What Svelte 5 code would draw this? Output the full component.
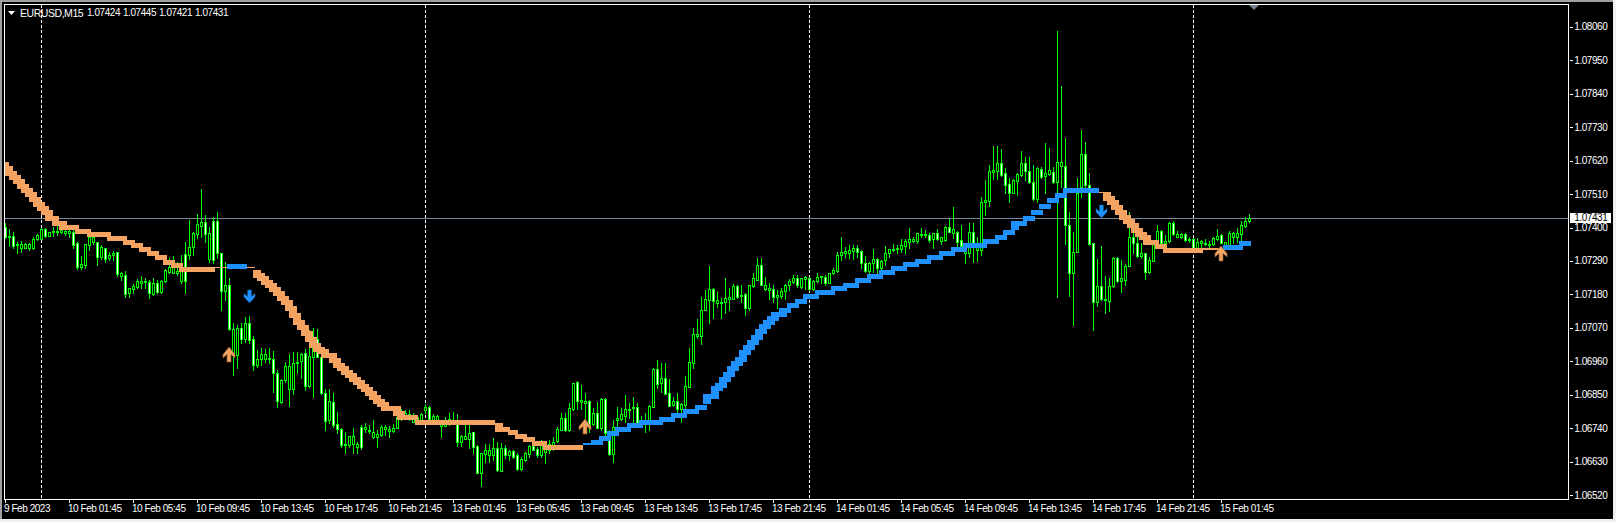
<script>
  const candles = [
    [223,227,237,238,1],[229,236,237,246],[232,236,246,248,1],[242,244,245,253],[241,244,248,252],[243,244,248,248],[243,244,248,250],[237,239,248,249],[234,235,239,240],[228,229,239,239],
    [228,229,236,237,1],[232,232,236,236],[227,231,232,236],[226,231,232,235],[227,230,232,233],[227,231,233,235],[227,231,233,237],[227,232,245,248,1],[242,243,267,269,1],[256,264,267,269],
    [244,244,265,268],[235,237,245,250],[234,237,242,244],[242,242,257,265,1],[245,247,257,259],[248,248,259,262,1],[252,255,258,260],[251,253,255,260],[252,252,274,276,1],[272,273,276,280],
    [271,275,294,297,1],[288,288,293,297],[284,286,289,293],[279,281,287,288],[276,281,283,288],[278,281,282,288],[280,282,293,298,1],[278,283,294,295],[280,283,292,293,1],[280,281,292,293],
    [269,270,281,282],[258,267,272,273],[256,267,273,273],[262,271,273,275],[255,270,281,283],[242,254,281,293,1],[220,247,255,259],[232,233,247,255],[214,224,234,238],[189,222,226,237],
    [215,222,234,242,1],[227,233,259,262],[217,221,260,263,1],[212,221,253,258,1],[253,253,291,310,1],[262,285,291,300],[278,285,329,330,1],[323,329,355,375],[325,328,355,368],[323,328,339,343,1],
    [317,323,339,342],[316,323,340,343,1],[336,339,365,370,1],[350,359,365,367],[348,354,359,365],[349,354,359,362],[348,358,359,363],[351,359,373,392,1],[370,373,401,407,1],[379,380,402,403],
    [362,366,380,382],[354,366,389,406],[352,363,389,394],[352,362,363,373],[353,354,361,378],[349,353,386,390,1],[330,356,386,387],[328,340,357,397],[329,339,357,357,1],[355,357,393,394,1],
    [389,393,421,430,1],[389,401,420,423],[393,402,425,427,1],[412,424,429,433,1],[428,429,445,447,1],[432,444,445,453],[436,436,445,447],[428,436,444,453],[442,444,447,453],[425,427,447,449,1],
    [423,427,429,432],[425,430,431,433],[420,432,437,438],[430,434,437,447],[425,427,435,436],[425,427,429,435],[426,429,431,437],[424,428,431,432],[411,417,428,428],
    [409,411,417,420],[410,413,416,418],[410,414,416,420],[413,415,422,422],[416,417,422,423],[413,414,420,421],[404,407,410,413],[406,407,419,420,1],[414,416,420,423],[415,416,423,423],
    [420,423,426,437],[417,423,426,426],[413,419,423,425],[412,420,423,424],[414,423,442,446,1],[435,436,442,446],[425,436,439,439],[423,433,439,448],[432,432,447,453,1],[445,446,473,473,1],
    [453,453,473,486],[444,450,454,462],[444,450,455,462],[438,448,455,460],[442,448,470,471,1],[443,448,471,471],[445,448,455,458,1],[450,451,455,460],[450,451,457,458,1],[453,455,469,470,1],
    [457,459,469,470],[452,453,460,461],[445,446,454,457],[440,446,450,450,1],[447,449,455,457,1],[440,445,455,457],[442,448,452,463],[440,444,450,453],[437,442,445,450],[427,429,441,442],
    [413,418,430,430],[413,418,430,431,1],[403,408,430,431],[383,383,409,410],[381,382,401,409,1],[385,400,402,409],[393,401,403,423],[400,401,425,432,1],[408,413,424,425],[402,413,428,428,1],
    [398,399,428,430],[398,399,433,435,1],[430,432,454,455,1],[420,427,454,462],[407,418,420,432],[408,414,419,420],[395,409,416,422],[403,409,410,418],[397,407,408,426],[403,407,423,425,1],
    [416,420,423,426],[413,420,423,432],[405,406,420,430],[368,369,407,407],[360,369,384,388,1],[363,378,383,392],[363,378,394,394,1],[379,393,406,406,1],[397,401,405,406],[393,401,409,412,1],
    [403,404,409,422],[376,386,405,413],[348,362,387,387],[328,334,363,368],[319,334,336,338],[297,310,336,344],[290,299,310,310],[266,289,300,323],[288,289,301,318,1],[292,300,303,307],
    [298,302,303,318],[278,298,302,313],[288,297,299,310],[284,286,299,299],[285,286,297,298,1],[285,295,296,302],[293,294,308,315,1],[285,285,308,310],[273,278,286,287],[258,265,280,280],
    [258,265,285,285,1],[277,285,289,290],[283,288,290,299],[285,289,297,302,1],[290,295,297,308],[288,291,296,298],[284,285,291,299],[279,281,285,290],[275,278,282,283],[275,278,285,287,1],
    [278,278,287,288],[276,277,279,289],[277,278,289,290,1],[280,281,289,290],[273,277,281,282],[276,276,277,283],[275,277,283,285,1],[273,273,283,283],[268,270,273,274],[252,255,271,272],
    [237,252,255,260],[247,251,253,257],[245,250,253,258],[245,248,251,259],[245,248,252,257,1],[250,251,263,268,1],[256,263,271,272,1],[262,263,271,277],[249,259,263,272],[258,259,268,273,1],
    [260,261,268,273],[246,253,260,265],[249,249,253,257],[244,249,250,251],[245,248,249,253],[239,245,249,252],[239,241,246,253],[228,239,242,248],[237,239,241,242],[233,233,241,243],
    [228,234,235,237],[230,234,235,237],[233,235,240,242,1],[233,233,239,248],[229,233,239,240,1],[237,237,241,244],[226,227,240,241],[219,227,232,232,1],[207,229,233,238],[231,232,242,247,1],
    [225,240,246,250,1],[243,247,253,263],[223,232,253,257],[223,232,243,262,1],[237,245,250,261],[197,202,250,255],[180,200,202,215],[165,171,201,206],[146,170,172,179],[146,163,171,179],
    [149,163,175,176,1],[168,173,185,193,1],[178,184,193,202,1],[179,180,193,193],[173,174,181,195],[151,163,175,176],[157,163,171,180,1],[157,171,182,183,1],[165,182,199,200,1],[167,168,199,202],
    [167,169,177,178,1],[143,173,176,193],[148,170,174,175],[167,172,182,183,1],[31,162,182,297],[86,162,166,187],[138,166,225,244,1],[212,225,273,296,1],[232,252,273,325],[178,193,252,252],
    [130,154,187,197],[142,154,185,187,1],[173,185,244,245,1],[243,243,302,330,1],[259,286,302,306],[246,286,299,300,1],[276,299,300,313],[278,286,301,311],[257,258,286,287],[257,258,281,282,1],
    [260,278,281,292],[264,266,280,285],[212,237,266,266],[220,237,243,253,1],[227,243,256,257,1],[243,253,256,258],[253,253,272,279,1],[257,260,272,273],[240,244,261,261],[225,231,244,245],
    [230,231,243,243,1],[235,241,243,250],[222,223,241,242],[221,223,234,235,1],[231,234,237,237],[233,234,237,238],[233,234,240,241,1],[237,239,240,242],[238,239,248,249,1],[238,242,248,249],
    [240,241,243,248],[239,243,244,245],[241,244,245,248],[237,238,244,245],[229,236,239,240],[234,235,243,243,1],[242,242,245,247],[231,233,245,249],[232,233,237,243],[228,233,237,242],
    [221,225,234,240],[217,221,226,227],[214,218,221,222]
  ].map(([hi, top, bot, lo, white], k) => ({ x: 5 + 4 * k, hi, top, bot, lo, white }));

  // One 8px block per bar, centred on the bar.
  const steps = (startK, ys) => ys.map((y, i) => [1 + 4 * (startK + i), 9 + 4 * (startK + i), y]);

  // The indicator is a 5px pen: on the slopes a block also reaches down to the next level.
  const blocks = (segments) => segments.map(([a, b, y], i) => {
    const next = segments[i + 1];
    const steep = b - a <= 8 && next && Math.abs(next[2] - y) < 12;
    const y0 = steep ? Math.min(y, next[2]) : y;
    const y1 = steep ? Math.max(y, next[2]) : y;
    return { x: Math.max(a, 5), w: b - Math.max(a, 5), y: Math.round(y0 - 2.5), h: Math.round(y1 - y0 + 5) };
  });

  const orange = blocks([
    ...steps(0, [164, 168, 173, 177, 181, 186, 190, 194, 199, 204, 208, 212]),
    [52, 59, 218], [59, 67, 223], [63, 79, 227], [75, 91, 231], [87, 111, 234.5], [107, 127, 238],
    [123, 135, 242], [131, 143, 245], [139, 151, 249], [147, 159, 253], [155, 167, 257], [163, 175, 262],
    [171, 183, 265], [179, 215, 269],
    ...steps(63, [272, 275, 278, 282, 285, 289, 293, 298, 302, 308, 315, 322, 327, 333, 339, 345, 349, 351, 355, 355, 360, 365, 368, 372, 375, 379, 382, 386, 389, 393, 397, 401, 404, 408, 408, 408, 413]),
    [403, 418, 417], [415, 495, 422], [495, 503, 425], [500, 510, 429], [508, 518, 432], [515, 527, 436],
    [523, 535, 439], [532, 547, 443], [543, 583, 447],
    [1103, 1111, 194], [1107, 1115, 198], [1111, 1119, 202], [1115, 1123, 207], [1119, 1127, 212], [1123, 1131, 217],
    [1127, 1135, 221], [1131, 1139, 225], [1135, 1143, 230], [1139, 1147, 234], [1143, 1151, 237], [1147, 1159, 242],
    [1155, 1167, 246], [1163, 1203, 250]
  ]);

  const blue = blocks([
    [227, 247, 266],
    [591, 603, 442], [599, 611, 438], [607, 619, 433], [615, 631, 429], [627, 643, 425], [639, 663, 422],
    [659, 675, 419], [671, 687, 415], [683, 699, 411], [695, 707, 407], [703, 711, 401], [707, 719, 396],
    [711, 719, 393], [715, 723, 388], [719, 727, 385], [723, 731, 379], [727, 735, 374], [731, 739, 368],
    [735, 743, 363], [739, 747, 359], [743, 751, 352], [747, 755, 347], [751, 759, 342], [755, 763, 337],
    [759, 767, 331], [763, 771, 326], [767, 775, 322], [771, 779, 318], [775, 787, 314], [779, 791, 310],
    [787, 799, 305], [795, 807, 301], [803, 819, 296], [815, 835, 292], [831, 847, 288], [843, 859, 285],
    [855, 871, 280], [867, 883, 276], [879, 895, 272], [891, 907, 268], [903, 919, 264], [915, 931, 261],
    [927, 943, 257], [939, 955, 253], [951, 967, 249], [963, 987, 245], [983, 999, 241], [995, 1007, 237],
    [1003, 1015, 232], [1011, 1019, 227], [1015, 1027, 223], [1023, 1035, 218], [1031, 1043, 212], [1039, 1051, 206],
    [1047, 1059, 200], [1055, 1067, 195], [1063, 1099, 190], [1223, 1243, 247], [1239, 1251, 243.5]
  ]);

  const thin = [
    { x: 215, w: 12, y: 267, h: 1, c: '#f4a460' },
    { x: 247, w: 8, y: 267, h: 1, c: '#f4a460' },
    { x: 583, w: 9, y: 443, h: 2, c: '#1e90ff' },
    { x: 1099, w: 4, y: 192, h: 1, c: '#f4a460' },
    { x: 1203, w: 17, y: 248, h: 2, c: '#f4a460' }
  ];

  const arrowsUp = [[229, 347], [585, 419], [1221, 246]];
  const arrowsDown = [[249.5, 290], [1101.5, 205]];
  const upPath = 'M0 0 L6 7.5 L6 11 L2 7.5 L2 15 L-2 15 L-2 7.5 L-6 11 L-6 7.5 Z';
  const downPath = 'M-2 0 L2 0 L2 6.5 L5.5 3.5 L5.5 7 L0 13 L-5.5 7 L-5.5 3.5 L-2 6.5 Z';

  const gridLines = [41, 425, 809, 1193];

  const prices = ['1.08060', '1.07950', '1.07840', '1.07730', '1.07620', '1.07510', '1.07400', '1.07290',
    '1.07180', '1.07070', '1.06960', '1.06850', '1.06740', '1.06630', '1.06520'];

  const times = ['9 Feb 2023', '10 Feb 01:45', '10 Feb 05:45', '10 Feb 09:45', '10 Feb 13:45', '10 Feb 17:45', '10 Feb 21:45',
    '13 Feb 01:45', '13 Feb 05:45', '13 Feb 09:45', '13 Feb 13:45', '13 Feb 17:45', '13 Feb 21:45',
    '14 Feb 01:45', '14 Feb 05:45', '14 Feb 09:45', '14 Feb 13:45', '14 Feb 17:45', '14 Feb 21:45', '15 Feb 01:45'];
</script>

<div class="window">
  <div class="chart-row">
    <div class="plot">
      <svg class="canvas" viewBox="5 5 1563 494" width="1563" height="494" shape-rendering="crispEdges">
        {#each gridLines as x}
          <line x1={x + 0.5} y1="5" x2={x + 0.5} y2="499" class="grid" />
        {/each}
        <rect x="5" y="218" width="1563" height="1" fill="#778899" />
        {#each candles as c}
          <rect x={c.x} y={c.hi} width="1" height={c.lo - c.hi + 1} fill="#00ff00" />
          <rect x={c.x - 1} y={c.top} width="3" height={c.bot - c.top + 1} fill="#00ff00" />
          {#if c.bot - c.top >= 2}
            <rect x={c.x} y={c.top + 1} width="1" height={c.bot - c.top - 1} fill={c.white ? '#ffffff' : '#000000'} />
          {/if}
        {/each}
        {#each orange as b}
          <rect x={b.x} y={b.y} width={b.w} height={b.h} fill="#f4a460" />
        {/each}
        {#each blue as b}
          <rect x={b.x} y={b.y} width={b.w} height={b.h} fill="#1e90ff" />
        {/each}
        {#each thin as t}
          <rect x={t.x} y={t.y} width={t.w} height={t.h} fill={t.c} />
        {/each}
        <g shape-rendering="geometricPrecision">
          {#each arrowsUp as [x, y]}
            <path d={upPath} transform="translate({x} {y})" fill="#f4a460" stroke="#8a5a30" stroke-width=".7" />
          {/each}
          {#each arrowsDown as [x, y]}
            <path d={downPath} transform="translate({x} {y})" fill="#1e90ff" stroke="#12568f" stroke-width=".5" />
          {/each}
        </g>
      </svg>
      <div class="legend">
        <svg class="caret" viewBox="0 0 7 4" width="7" height="4"><path d="M0 0H7L3.5 4Z" fill="#fff" /></svg>
        <span class="symbol">EURUSD,M15</span>
        <span class="quote">1.07424</span>
        <span class="quote">1.07445</span>
        <span class="quote">1.07421</span>
        <span class="quote">1.07431</span>
      </div>
      <svg class="marker" viewBox="0 0 10 5" width="10" height="5"><path d="M0 0H10L5 5Z" fill="#708090" /></svg>
    </div>
    <div class="prices">
      {#each prices as p}
        <div class="price"><i class="ptick"></i><span>{p}</span></div>
      {/each}
      <div class="tag">1.07431</div>
    </div>
  </div>
  <div class="times">
    {#each times as t}
      <div class="time"><i class="ttick"></i><span>{t}</span></div>
    {/each}
  </div>
</div>

<style>
  :global(body) {
    margin: 0;
    background: #f0f0f0;
  }
  .window {
    width: 1609px;
    height: 515px;
    background: #000;
    border-top: 2px solid #a0a0a0;
    border-left: 2px solid #a0a0a0;
    padding: 2px 0 0 2px;
    color: #fff;
    font: 10px/12px "Liberation Sans", Arial, sans-serif;
    letter-spacing: -0.45px;
    overflow: hidden;
  }
  .chart-row {
    display: flex;
    height: 496px;
  }
  .plot {
    position: relative;
    width: 1563px;
    height: 494px;
    border: 1px solid #fff;
    flex: none;
  }
  .canvas {
    display: block;
  }
  .grid {
    stroke: #fff;
    stroke-width: 1;
    stroke-dasharray: 3 2;
  }
  .legend {
    position: absolute;
    top: 2px;
    left: 3px;
    display: flex;
    align-items: center;
    white-space: nowrap;
    height: 12px;
  }
  .caret {
    margin-right: 5px;
  }
  .symbol {
    width: 67px;
    flex: none;
    font-size: 10.5px;
  }
  .quote {
    width: 36px;
    flex: none;
  }
  .marker {
    position: absolute;
    top: 0;
    left: 1244px;
  }
  .prices {
    position: relative;
    flex: none;
    width: 44px;
    height: 496px;
    padding-top: 17.3px;
    box-sizing: border-box;
    display: grid;
    grid-auto-rows: 33.46px;
    align-content: start;
  }
  .price {
    display: flex;
    align-items: center;
    height: 12px;
  }
  .ptick {
    width: 3px;
    height: 1px;
    background: #fff;
    margin: 0 1.3px 0 1px;
    flex: none;
  }
  .tag {
    position: absolute;
    top: 209px;
    left: 1px;
    width: 41px;
    height: 10px;
    line-height: 10px;
    background: #fff;
    color: #000;
    padding-left: 4.3px;
    box-sizing: border-box;
  }
  .times {
    display: grid;
    grid-template-columns: repeat(20, 64px);
    padding-left: 1px;
  }
  .time {
    height: 19px;
  }
  .ttick {
    display: block;
    width: 1px;
    height: 3px;
    background: #fff;
  }
  .time span {
    display: block;
    margin-left: -1px;
    white-space: nowrap;
  }
</style>
